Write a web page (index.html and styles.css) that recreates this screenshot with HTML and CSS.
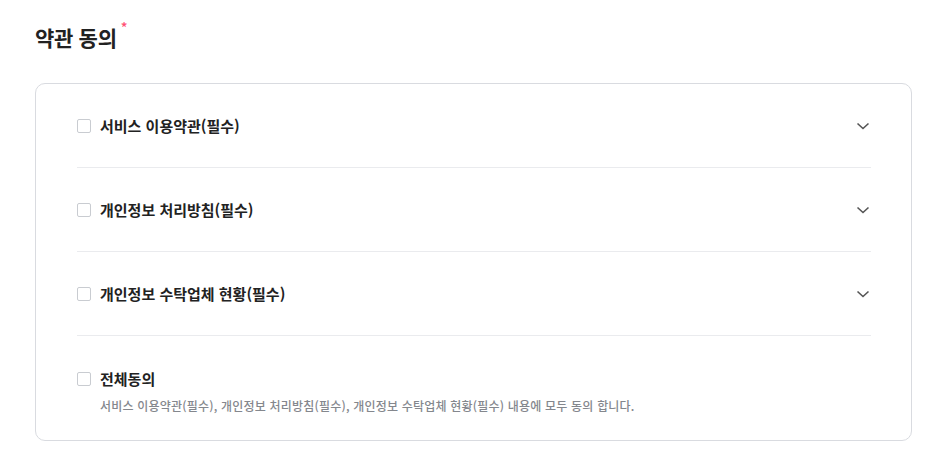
FILE: index.html
```html
<!DOCTYPE html>
<html lang="ko">
<head>
  <meta charset="UTF-8">
  <title>약관 동의</title>
  <link rel="stylesheet" href="styles.css">
</head>
<body>
  <!-- Terms section -->
  <div class="terms">
    <h2 class="terms-title">약관 동의<span class="required">*</span></h2>

    <div class="terms-box">
      <div class="terms-row">
        <label class="check"><span class="box"></span>서비스 이용약관(필수)</label>
        <svg class="chevron" width="14" height="8" viewBox="0 0 14 8"><path d="M1.5 1.5 L7 6.5 L12.5 1.5" fill="none" stroke="#555" stroke-width="1.6"/></svg>
      </div>
      <div class="terms-row">
        <label class="check"><span class="box"></span>개인정보 처리방침(필수)</label>
        <svg class="chevron" width="14" height="8" viewBox="0 0 14 8"><path d="M1.5 1.5 L7 6.5 L12.5 1.5" fill="none" stroke="#555" stroke-width="1.6"/></svg>
      </div>
      <div class="terms-row">
        <label class="check"><span class="box"></span>개인정보 수탁업체 현황(필수)</label>
        <svg class="chevron" width="14" height="8" viewBox="0 0 14 8"><path d="M1.5 1.5 L7 6.5 L12.5 1.5" fill="none" stroke="#555" stroke-width="1.6"/></svg>
      </div>
      <div class="terms-row all">
        <label class="check"><span class="box"></span>전체동의</label>
        <p class="all-desc">서비스 이용약관(필수), 개인정보 처리방침(필수), 개인정보 수탁업체 현황(필수) 내용에 모두 동의 합니다.</p>
      </div>
    </div>
  </div>
</body>
</html>
```

FILE: styles.css
```css
body {
  margin: 0;
  padding: 0;
  background-color: #ffffff;
  font-family: "Noto Sans CJK KR", "Noto Sans", sans-serif;
  color: #222222;
}

/* Terms */
.terms {
  padding: 20px 31px 0 35px;
}

.terms-title {
  margin: 0 0 29px;
  font-size: 21px;
  font-weight: 700;
  line-height: 34px;
  letter-spacing: -0.3px;
  color: #222222;
}

.terms-title .required {
  color: #ff4f73;
  font-size: 14px;
  font-weight: 500;
  vertical-align: top;
  margin-left: 4px;
  line-height: 14px;
}

.terms-box {
  border: 1px solid #d9dbe0;
  border-radius: 10px;
  padding: 0 40px 0 41px;
}

.terms-row {
  display: flex;
  justify-content: space-between;
  align-items: center;
  padding: 33px 0;
  border-bottom: 1px solid #eaebee;
}

.terms-row.all {
  display: block;
  padding: 34px 0 27px;
  border-bottom: none;
}

.check {
  display: flex;
  align-items: center;
  font-size: 15px;
  font-weight: 700;
  line-height: 17px;
  color: #222222;
}

.check .box {
  width: 12px;
  height: 12px;
  border: 1px solid #c9ccd1;
  border-radius: 2px;
  margin-right: 9px;
  background-color: #ffffff;
}

.chevron {
  margin-right: 1px;
}

.all-desc {
  margin: 12px 0 0 23px;
  font-size: 12px;
  font-weight: 500;
  line-height: 14px;
  letter-spacing: 0.2px;
  color: #84878d;
}
```
